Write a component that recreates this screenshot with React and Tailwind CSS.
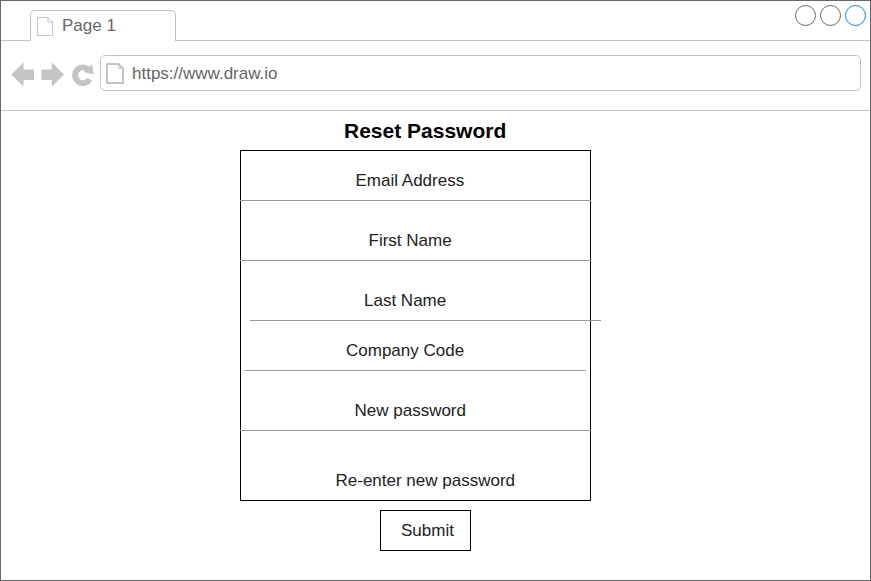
const rows = [
  { label: "Email Address", row: "-mx-px h-[50px]", text: "ml-[115.5px]" },
  { label: "First Name", row: "-mx-px h-[60px]", text: "ml-[128.5px]" },
  { label: "Last Name", row: "ml-[9px] -mr-[11px] h-[60px]", text: "ml-[114px]" },
  { label: "Company Code", row: "ml-[4px] mr-[4px] h-[50px]", text: "ml-[101px]" },
  { label: "New password", row: "-mx-px h-[60px]", text: "ml-[114.5px]" },
];

function TabPageIcon() {
  return (
    <svg className="h-5 w-[18px]" viewBox="0 0 18 20" fill="none" stroke="#c4c4c4">
      <path d="M1.5 1.5H12L16.5 6V19.5H1.5Z" />
      <path d="M12 1.5V6H16.5" />
    </svg>
  );
}

function AddressPageIcon() {
  return (
    <svg className="h-[21px] w-[18px]" viewBox="0 0 18 21" fill="none" stroke="#c4c4c4">
      <path d="M1 1H12.5L17 5.5V20H1Z" strokeWidth="2" />
      <path d="M12.5 1V5.5H17" />
    </svg>
  );
}

function Tabs() {
  return (
    <div className="flex h-10 shrink-0">
      <div className="w-[29px] border-b border-[#c4c4c4]" />
      <div className="mt-[9px] flex w-[146px] rounded-t-[5px] border border-b-0 border-[#c0c0c0] pl-[5px] pt-[5px]">
        <TabPageIcon />
        <span className="ml-2 text-[17px] leading-5 text-[#666]">Page 1</span>
      </div>
      <div className="flex flex-1 justify-end gap-1 border-b border-[#c4c4c4] pr-1 pt-1">
        <span className="size-[21px] rounded-full border border-[#666]" />
        <span className="size-[21px] rounded-full border border-[#666]" />
        <span className="size-[21px] rounded-full border border-[#008cff]" />
      </div>
    </div>
  );
}

function Toolbar() {
  return (
    <div className="flex h-[70px] shrink-0 border-b border-[#c4c4c4] pl-[10px] pr-[9px] pt-[14px]">
      <svg className="mt-[7px] h-[26px] w-[84px]" viewBox="0 0 84 26" fill="#c4c4c4">
        <path d="M0.3 12.5L12.5 0.5V7.5H23V18H12.5V24.5Z" />
        <path d="M53 12.5L40.8 0.5V7.5H30.3V18H40.8V24.5Z" />
        <path d="M78.8 17.3A7.9 7.9 0 1 1 77.3 7.4" fill="none" stroke="#c4c4c4" strokeWidth="5.8" />
        <path d="M81 2.2L82.8 12.4L72.6 9.9Z" />
      </svg>
      <div className="ml-[5px] flex h-9 flex-1 rounded-[5px] border border-[#c4c4c4] pl-[5px] pt-[7px]">
        <AddressPageIcon />
        <span className="ml-2 mt-px text-[17px] leading-5 text-[#666]">https://www.draw.io</span>
      </div>
    </div>
  );
}

export default function App() {
  return (
    <div className="flex h-[581px] w-[871px] flex-col overflow-hidden border border-[#666] bg-white font-['Liberation_Sans',Arial,sans-serif]">
      <Tabs />
      <Toolbar />
      <main className="flex flex-col items-start text-[17px] text-[#222]">
        <h1 className="ml-[343px] mt-2 h-[31px] text-[21px] font-bold leading-6 text-black">Reset Password</h1>
        <form className="ml-[239px] flex h-[351px] w-[351px] flex-col border border-black">
          {rows.map((r) => (
            <div key={r.label} className={`flex shrink-0 items-end border-b border-[#999] pb-[9px] ${r.row}`}>
              <label className={`whitespace-nowrap leading-5 ${r.text}`}>{r.label}</label>
            </div>
          ))}
          <div className="flex flex-1 items-end pb-[9px]">
            <label className="ml-[94.5px] whitespace-nowrap leading-5">Re-enter new password</label>
          </div>
        </form>
        <button className="ml-[379px] mt-[9px] flex h-[41px] w-[91px] items-center border border-black pl-5 leading-5">
          Submit
        </button>
      </main>
    </div>
  );
}
